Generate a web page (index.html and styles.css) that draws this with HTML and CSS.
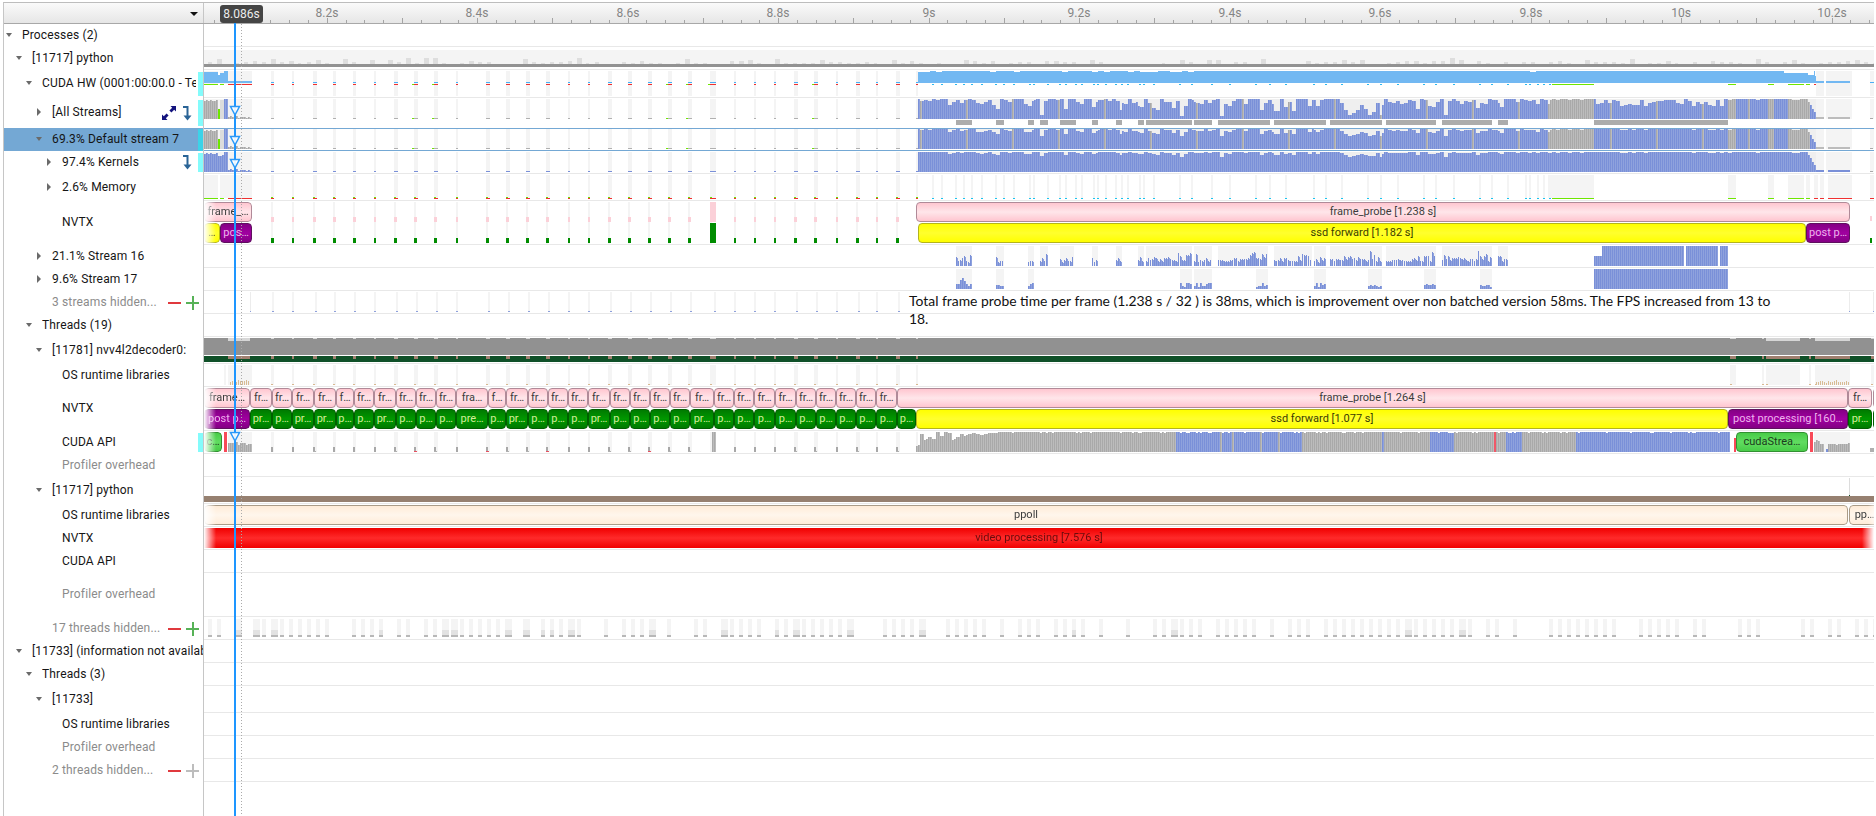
FILE: index.html
```html
<!doctype html>
<html>
<head>
<meta charset="utf-8">
<title>Timeline</title>
<link rel="stylesheet" href="styles.css">
</head>
<body>
<div class="app">
    <div class="head">
        <div class="corner"><i class="drop"></i></div>
        <div class="ruler" id="ruler"></div>
    </div>

    <div class="row">
        <div class="label"><i class="tw open"></i><span class="name">Processes (2)</span></div>
        <div class="track"></div>
    </div>
    <div class="row">
        <div class="label lv1"><i class="tw open"></i><span class="name">[11717] python</span></div>
        <div class="track" id="summary"></div>
    </div>
    <div class="row h28">
        <div class="label lv2"><i class="tw open"></i><span class="name">CUDA HW (0001:00:00.0 - Tegra)</span><b class="strip"></b></div>
        <div class="track" id="hw"></div>
    </div>
    <div class="row h30 noline">
        <div class="label lv3"><i class="tw shut"></i><span class="name">[All Streams]</span>
            <svg class="ico expand" width="14" height="14" viewBox="0 0 14 14"><path d="M0 14V8.500L1.800 10.200 4.600 7.400 6.600 9.400 3.800 12.200 5.500 14ZM14 0V5.500L12.200 3.800 9.400 6.600 7.400 4.600 10.200 1.800 8.500 0Z"/></svg>
            <svg class="ico drill" width="10" height="15" viewBox="0 0 10 15"><path d="M1 1H5.500V11" fill="none" stroke-width="2"/><path class="head-fill" d="M1.500 9.500H9.500L5.500 14.500Z"/></svg>
            <b class="strip"></b></div>
        <div class="track" id="all"></div>
    </div>
    <div class="row selected">
        <div class="label lv3"><i class="tw open"></i><span class="name">69.3% Default stream 7</span><b class="strip"></b></div>
        <div class="track" id="def"></div>
    </div>
    <div class="row">
        <div class="label lv4"><i class="tw shut"></i><span class="name">97.4% Kernels</span>
            <svg class="ico drill" width="10" height="15" viewBox="0 0 10 15"><path d="M1 1H5.500V11" fill="none" stroke-width="2"/><path class="head-fill" d="M1.500 9.500H9.500L5.500 14.500Z"/></svg>
            <b class="strip"></b></div>
        <div class="track" id="kern"></div>
    </div>
    <div class="row h27">
        <div class="label lv4"><i class="tw shut"></i><span class="name">2.6% Memory</span></div>
        <div class="track" id="mem"></div>
    </div>
    <div class="row h44">
        <div class="label lv4"><i class="tw"></i><span class="name">NVTX</span></div>
        <div class="track" id="nvtx"></div>
    </div>
    <div class="row">
        <div class="label lv3"><i class="tw shut"></i><span class="name">21.1% Stream 16</span></div>
        <div class="track" id="s16"></div>
    </div>
    <div class="row">
        <div class="label lv3"><i class="tw shut"></i><span class="name">9.6% Stream 17</span></div>
        <div class="track" id="s17"></div>
    </div>
    <div class="row">
        <div class="label lv3 dim"><i class="tw"></i><span class="name">3 streams hidden...</span>
            <svg class="ico pm" width="31" height="14" viewBox="0 0 31 14"><path class="minus" d="M0 6H13V8H0Z"/><path class="plus" d="M18 6H24V0H26V6H31V8H26V14H24V8H18Z"/></svg></div>
        <div class="track" id="hid3"></div>
    </div>
    <div class="row">
        <div class="label lv2"><i class="tw open"></i><span class="name">Threads (19)</span></div>
        <div class="track"></div>
    </div>
    <div class="row h27">
        <div class="label lv3"><i class="tw open"></i><span class="name">[11781] nvv4l2decoder0:</span></div>
        <div class="track" id="dec"></div>
    </div>
    <div class="row">
        <div class="label lv4"><i class="tw"></i><span class="name">OS runtime libraries</span></div>
        <div class="track" id="os1"></div>
    </div>
    <div class="row h44">
        <div class="label lv4"><i class="tw"></i><span class="name">NVTX</span></div>
        <div class="track" id="nv1"></div>
    </div>
    <div class="row">
        <div class="label lv4"><i class="tw"></i><span class="name">CUDA API</span><b class="strip"></b></div>
        <div class="track" id="api1"></div>
    </div>
    <div class="row">
        <div class="label lv4 dim"><i class="tw"></i><span class="name">Profiler overhead</span></div>
        <div class="track"></div>
    </div>
    <div class="row h27">
        <div class="label lv3"><i class="tw open"></i><span class="name">[11717] python</span></div>
        <div class="track" id="py"></div>
    </div>
    <div class="row">
        <div class="label lv4"><i class="tw"></i><span class="name">OS runtime libraries</span></div>
        <div class="track" id="os2"></div>
    </div>
    <div class="row">
        <div class="label lv4"><i class="tw"></i><span class="name">NVTX</span></div>
        <div class="track" id="nv2"></div>
    </div>
    <div class="row">
        <div class="label lv4"><i class="tw"></i><span class="name">CUDA API</span></div>
        <div class="track"></div>
    </div>
    <div class="row h44">
        <div class="label lv4 dim"><i class="tw"></i><span class="name">Profiler overhead</span></div>
        <div class="track"></div>
    </div>
    <div class="row">
        <div class="label lv3 dim"><i class="tw"></i><span class="name">17 threads hidden...</span>
            <svg class="ico pm" width="31" height="14" viewBox="0 0 31 14"><path class="minus" d="M0 6H13V8H0Z"/><path class="plus" d="M18 6H24V0H26V6H31V8H26V14H24V8H18Z"/></svg></div>
        <div class="track" id="hid17"></div>
    </div>
    <div class="row">
        <div class="label lv1"><i class="tw open"></i><span class="name">[11733] (information not available)</span></div>
        <div class="track"></div>
    </div>
    <div class="row">
        <div class="label lv2"><i class="tw open"></i><span class="name">Threads (3)</span></div>
        <div class="track"></div>
    </div>
    <div class="row h27">
        <div class="label lv3"><i class="tw open"></i><span class="name">[11733]</span></div>
        <div class="track"></div>
    </div>
    <div class="row">
        <div class="label lv4"><i class="tw"></i><span class="name">OS runtime libraries</span></div>
        <div class="track"></div>
    </div>
    <div class="row">
        <div class="label lv4 dim"><i class="tw"></i><span class="name">Profiler overhead</span></div>
        <div class="track"></div>
    </div>
    <div class="row">
        <div class="label lv3 dim"><i class="tw"></i><span class="name">2 threads hidden...</span>
            <svg class="ico pm off" width="31" height="14" viewBox="0 0 31 14"><path class="minus" d="M0 6H13V8H0Z"/><path class="plus" d="M18 6H24V0H26V6H31V8H26V14H24V8H18Z"/></svg></div>
        <div class="track"></div>
    </div>
    <div class="row rest">
        <div class="label"></div>
        <div class="track"></div>
    </div>
</div>

<p class="note">Total frame probe time per frame (1.238 s / 32 ) is 38ms, which is improvement over non batched version 58ms. The FPS increased from 13 to 18.</p>
<svg class="cursor" id="cursor" width="1876" height="816"></svg>
<div class="flag">8.086s</div>

<script src="app.js"></script>
</body>
</html>
```

FILE: styles.css
```css
*{
    box-sizing: border-box;
}
html,body{
    height: 100%;
    margin: 0;
}
body{
    background-color: #fff;
    font: 12px Roboto,sans-serif;
    color: #151515;
    padding: 2px 2px 0 3px;
    overflow: hidden;
}
.app{
    height: 100%;
    display: flex;
    flex-direction: column;
    border-top: 1px solid #bdbdbd;
    border-left: 1px solid #c6c6c6;
}

.head{
    display: flex;
    flex: none;
    height: 21px;
    background: linear-gradient(#fafafa,#e6e6e6);
    border-bottom: 1px solid #a8a8a8;
}
.corner{
    width: 200px;
    flex: none;
    border-right: 1px solid #c6c6c6;
    position: relative;
}
.drop{
    position: absolute;
    left: 186px;
    top: 9px;
    border: 4px solid transparent;
    border-top: 4px solid #111;
    border-bottom: 0;
}
.ruler{
    flex: 1;
    position: relative;
    overflow: hidden;
}
.ruler svg,.track svg{
    position: absolute;
    left: 0;
    top: 0;
    shape-rendering: crispEdges;
}
.tick-label{
    position: absolute;
    top: 3px;
    width: 40px;
    margin-left: -20px;
    text-align: center;
    line-height: 14px;
    color: #858585;
}

.row{
    display: flex;
    flex: none;
    height: 23px;
}
.h27{ height: 27px; }
.h28{ height: 28px; }
.h30{ height: 30px; }
.h44{ height: 44px; }
.rest{ flex: 1; }

.label{
    width: 200px;
    flex: none;
    display: flex;
    align-items: center;
    border-right: 1px solid #c6c6c6;
}
.lv1{ padding-left: 10px; }
.lv2{ padding-left: 20px; }
.lv3{ padding-left: 30px; }
.lv4{ padding-left: 40px; }
.dim{ color: #8b8b8b; }
.name{
    flex: 1;
    min-width: 0;
    overflow: hidden;
    white-space: nowrap;
    letter-spacing: .15px;
    padding: 0 3px 2px 0;
}
.tw{
    flex: none;
    width: 18px;
    height: 8px;
    position: relative;
}
.tw::before{
    content: '';
    position: absolute;
    left: 2px;
    top: -1px;
}
.open::before{
    top: 1px;
    border: 3px solid transparent;
    border-top: 4px solid #6a6a6a;
    border-bottom: 0;
}
.shut::before{
    left: 3px;
    border: 4px solid transparent;
    border-left: 4px solid #6a6a6a;
    border-right: 0;
}
.strip{
    flex: none;
    width: 5px;
    margin: 2px 0 2px 2px;
    align-self: stretch;
    background-color: #84fbfb;
}
.ico{
    flex: none;
}
.expand{
    fill: #14147e;
    margin-right: 6px;
}
.drill{
    stroke: #2a6496;
    margin-right: 4px;
}
.drill .head-fill{
    fill: #2a6496;
    stroke: none;
}
.pm{
    margin-right: 4px;
}
.minus{ fill: #e0393e; }
.plus{ fill: #57b257; }
.off .plus{ fill: #bdbdbd; }

.selected .label{
    background-color: #74a8d4;
}
.selected .strip{
    margin: 1px 0 0 2px;
    background-color: #3cd3e8;
}
.selected .track{
    border-bottom-color: #74a8d4;
    box-shadow: inset 0 1px #74a8d4;
}

.track{
    flex: 1;
    min-width: 0;
    position: relative;
    overflow: hidden;
    border-bottom: 1px solid #e8e8e8;
}
.noline .track{
    border-bottom: 0;
}
.rest .track{
    border-bottom: 0;
}

.bar{
    position: absolute;
    display: flex;
    align-items: center;
    justify-content: center;
    overflow: hidden;
    white-space: nowrap;
    border: 1px solid;
    border-radius: 4px;
    font-size: 11px;
    line-height: 14px;
}
.pink{
    background: linear-gradient(#ffc6d0,#ffe6ea 50%,#ffc6d0);
    border-color: #b08a98;
    color: #3c3c3c;
}
.yellow{
    background: linear-gradient(#ffff00,#ffff2e 50%,#ffff00);
    border-color: #b4b41c;
    color: #3c3c00;
}
.green{
    background: linear-gradient(#007a00,#009800 50%,#007a00);
    border-color: #006000;
    color: #d4ec9c;
}
.purple{
    background: linear-gradient(#840084,#a000a0 50%,#840084);
    border-color: #5f105f;
    color: #ecb4ec;
}
.lime{
    background: linear-gradient(#48cc48,#60dc60 50%,#48cc48);
    border-color: #329032;
    color: #1c3c1c;
}
.cream{
    background: linear-gradient(#ffecd8,#fff6ec 50%,#ffecd8);
    border-color: #aa9c88;
    color: #3c3c3c;
}
.red{
    background: linear-gradient(#f00000,#ff2a2a 50%,#f00000);
    border: 0;
    border-radius: 0;
    color: #6a0c0c;
}
.fade-l{
    -webkit-mask-image: linear-gradient(to right,transparent,#000 12px);
    mask-image: linear-gradient(to right,transparent,#000 12px);
}
.fade-r{
    -webkit-mask-image: linear-gradient(to left,transparent,#000 12px);
    mask-image: linear-gradient(to left,transparent,#000 12px);
}
.fade-lr{
    -webkit-mask-image: linear-gradient(to right,transparent,#000 12px,#000 calc(100% - 12px),transparent);
    mask-image: linear-gradient(to right,transparent,#000 12px,#000 calc(100% - 12px),transparent);
}

.note{
    position: absolute;
    left: 909px;
    top: 292px;
    width: 872px;
    margin: 0;
    font: 13.9px/18.3px Lato,sans-serif;
    color: #111;
}
.cursor{
    position: absolute;
    left: 0;
    top: 0;
    pointer-events: none;
}
.flag{
    position: absolute;
    left: 220px;
    top: 5px;
    width: 43px;
    height: 18px;
    border-radius: 3px;
    background-color: #454545;
    color: #ececec;
    line-height: 18px;
    text-align: center;
}
```

FILE: app.js
```js
const TX=204;
const BLUE=['#7a90d8','#8fa2dd'];
const GRAY=['#a9a9a9','#bcbcbc'];
const BAND='#f4f4f4';

// frame starts, seen on every row before the long ssd frame
const marks=[[271,3],[292,2],[313,4],[333,3],[353,3],[374,2],[394,4],[414,4],[434,4],[456,2],[486,4],[506,4],
    [526,4],[546,4],[568,2],[588,2],[608,4],[628,4],[648,4],[668,4],[688,4],[710,6],[734,2],[754,2],[774,2],
    [794,4],[814,4],[836,2],[856,4],[876,2],[896,4],[916,2]];
const cyan=[932,941,955,963,971,981,995,1003,1013,1029,1033,1047,1059,1065,1075,1081,1093,1097,1105,1115,1121,
    1127,1139,1143,1153,1179,1191,1211,1229,1255,1269,1285,1313,1325,1341,1367,1380,1397,1423,1435,1453,1479,
    1491,1507,1525,1529,1537,1543,1549];
const blocks=[[956,972],[996,1004],[1028,1034],[1040,1048],[1060,1074],[1092,1098],[1116,1122],[1138,1144],
    [1146,1192],[1194,1212],[1218,1268],[1274,1312],[1314,1326],[1330,1382],[1386,1436],[1442,1492],[1498,1508]];
const grayBlocks=[[956,972],[996,1004],[1028,1034],[1040,1048],[1060,1076],[1092,1098],[1116,1122],[1138,1144],
    [1146,1192],[1194,1212],[1218,1270],[1274,1326],[1330,1382],[1386,1436],[1442,1492],[1498,1508],[1594,1728]];
const s17=[[956,972],[996,1004],[1028,1034],[1180,1192],[1194,1212],[1256,1268],[1314,1326],[1368,1382],[1424,1436],[1480,1492]];
// parts of the long frame where the gpu is idle (gray) instead of busy
const idle=[[1548,1594],[1728,1736],[1768,1774],[1788,1810]];
const endMarks=[[1730,6],[1762,2],[1766,34],[1809,2],[1815,35],[1871,4]];

function noise(n){
    let v=Math.sin(n*12.9898+4.1)*43758.5453;
    return v-Math.floor(v);
}
function inside(list,x){
    return list.some(b=>x>=b[0]&&x<b[1]);
}

const tracks={};
document.querySelectorAll('.track[id]').forEach(el=>{
    tracks[el.id]={el:el,top:el.getBoundingClientRect().top,h:el.clientHeight,out:[]};
});
function rect(id,x,y,w,h,c){
    tracks[id].out.push(`<rect x="${x}" y="${y}" width="${w}" height="${h}" fill="${c}"/>`);
}
function bar(id,x0,x1,y0,y1,cls,text){
    let t=tracks[id];
    let d=document.createElement('div');
    d.className='bar '+cls;
    d.style.left=(x0-TX)+'px';
    d.style.top=(y0-t.top)+'px';
    d.style.width=(x1-x0)+'px';
    d.style.height=(y1-y0)+'px';
    d.textContent=text;
    t.el.appendChild(d);
}
function cols(id,x0,x1,y0,y1,pair,dip){
    for(let x=x0;x<x1;x+=2){
        let cut=Math.round(dip(x));
        let h=y1-y0-cut;
        if(h<=0) continue;
        rect(id,x,y1-h,1,h,pair[0]);
        rect(id,x+1,y1-h,1,h,pair[1]);
    }
}
function eachMark(f){
    for(let m of marks) f(m[0],m[1]);
}

// ruler
(function(){
    let ruler=document.getElementById('ruler');
    let ticks='';
    let xof=t=>Math.round(326.7+(t-8.2)*752.5);
    for(let i=-8;i<=84;i++){
        let x=Math.round(326.7+i*18.81);
        let tall=i%4==0;
        ticks+=`<rect x="${x-TX}" y="${tall?15:17}" width="1" height="${tall?5:3}" fill="#a4a4a4"/>`;
    }
    ruler.innerHTML=`<svg width="1670" height="20">${ticks}</svg>`;
    [['8.2s',8.2],['8.4s',8.4],['8.6s',8.6],['8.8s',8.8],['9s',9],['9.2s',9.2],['9.4s',9.4],['9.6s',9.6],['9.8s',9.8],['10s',10],['10.2s',10.2]].forEach(l=>{
        let s=document.createElement('span');
        s.className='tick-label';
        s.textContent=l[0];
        s.style.left=(xof(l[1])-TX)+'px';
        ruler.appendChild(s);
    });
})();

// process summary
rect('summary',204,50,1670,14,BAND);
for(let x=208;x<1874;x+=9){
    let k=noise(x);
    if(k<.2) continue;
    let h=1+Math.round(k*k*k*5);
    rect('summary',x,64-h,3+Math.round(k*2),h,'#dedede');
}
rect('summary',204,64,1670,3,'#929292');

// CUDA HW
rect('hw',204,71,14,13,BAND);rect('hw',220,71,32,13,BAND);
rect('hw',204,72,14,11,'#72b8f2');rect('hw',218,75,2,8,'#72b8f2');rect('hw',220,73,4,10,'#72b8f2');
rect('hw',224,71,4,12,'#72b8f2');rect('hw',228,81,24,2,'#72b8f2');
rect('hw',204,84,14,1,'#6ee600');rect('hw',220,84,4,1,'#6ee600');rect('hw',228,84,24,1,'#f03030');
eachMark((x,w)=>{
    rect('hw',x,71,w,25,BAND);
    rect('hw',x,82,w,1,'#4aaef4');
    rect('hw',x,84,w,1,'#f03030');
    if(x>=414&&x<440||x==668||x==688||x==710||x==814) rect('hw',x-2,84,2,1,'#6ee600');
});
rect('hw',918,71,897,12,'#72b8f2');
for(let x=918;x<1815;x+=6){
    let k=noise(x*3);
    if(x<1190&&k>.78||x>1520&&x<1545&&k>.3) rect('hw',x,71,6,1,'#fff');
}
rect('hw',1784,71,30,2,'#fff');rect('hw',1808,71,6,4,'#fff');
for(let x of cyan) rect('hw',x,84,2,1,'#2cb8f0');
[[1552,1594],[1728,1736],[1768,1774],[1788,1804],[1806,1810]].forEach(g=>rect('hw',g[0],84,g[1]-g[0],1,'#6ee600'));
[[1814,1818],[1820,1824],[1828,1852]].forEach(g=>rect('hw',g[0],84,g[1]-g[0],1,'#f03030'));
rect('hw',1816,71,8,25,BAND);rect('hw',1826,71,26,25,BAND);
rect('hw',1812,76,4,7,'#72b8f2');rect('hw',1816,81,8,2,'#72b8f2');rect('hw',1826,81,24,2,'#72b8f2');
rect('hw',1870,71,4,25,BAND);rect('hw',1870,82,4,1,'#4aaef4');

// queue charts, same shape on the three rows but less dipping further down
function queue(id,y0,y1,dipIn,dipOut,phase){
    rect(id,918,y0,898,y1-y0,'#efefef');
    rect(id,1816,y0,8,y1-y0,BAND);rect(id,1826,y0,26,y1-y0,BAND);rect(id,1870,y0,4,y1-y0,BAND);
    for(let x=918;x<1816;x+=2){
        let pair=inside(idle,x)&&id!='kern'?GRAY:BLUE;
        if(x%46==0&&id!='kern') pair=GRAY;
        let a=inside(blocks,x)?dipIn:dipOut;
        let k=noise(Math.floor(x/4)+phase);
        let cut=k*k*k*a;
        if(x>1548) cut=noise(Math.floor(x/4)+phase)*(x>1594&&x<1728&&id=='all'?7:0.6);
        if(x>=1806) cut=(x-1806)*1.6;
        let h=y1-y0-Math.round(cut);
        if(h>0){
            rect(id,x,y1-h,1,h,pair[0]);
            rect(id,x+1,y1-h,1,h,pair[1]);
        }
    }
    rect(id,1816,y1-2,8,2,id=='kern'?BLUE[0]:GRAY[1]);
    rect(id,1828,y1-2,22,2,id=='kern'?BLUE[0]:GRAY[1]);
    rect(id,1870,y1-1,3,1,GRAY[0]);
}
function firstFrame(id,y0,y1){
    rect(id,204,y0,48,y1-y0,BAND);
    cols(id,204,218,y0+1,y1,id=='kern'?BLUE:GRAY,x=>noise(x)*1.5);
    if(id=='kern'){
        cols(id,218,224,y0+3,y1,BLUE,x=>noise(x)*2);
    }else{
        rect(id,218,y0+10,2,y1-y0-10,'#6ee600');
        rect(id,220,y0+1,4,y1-y0-1,'#dcdcdc');
    }
    cols(id,224,228,y0,y1,BLUE,x=>0);
    cols(id,228,252,y1-3,y1,id=='kern'?BLUE:GRAY,x=>noise(x)*2);
    eachMark((x,w)=>{
        rect(id,x,y0,w,y1-y0,BAND);
        rect(id,x,y1-1,w,1,id=='kern'?'#7a90d8':'#b0b0b0');
        if(id!='kern'&&(x==414||x==434||x==668||x==688||x==814)) rect(id,x-2,y1-1,2,1,'#6ee600');
    });
}
firstFrame('all',99,119);
firstFrame('def',129,149);
firstFrame('kern',152,172);
queue('all',99,119,18,7,1);
queue('def',129,149,8,4,1);
queue('kern',152,172,5,2,1);
for(let b of grayBlocks) rect('all',b[0],120,b[1]-b[0],5,'#acacac');

// memory row
rect('mem',204,175,14,23,BAND);rect('mem',220,175,32,23,BAND);
rect('mem',204,198,14,1,'#6ee600');rect('mem',220,198,4,1,'#6ee600');rect('mem',228,198,24,1,'#f03030');
eachMark((x,w)=>{
    rect('mem',x,175,w,23,BAND);
    rect('mem',x,198,w,1,'#f03030');
    rect('mem',x,197,Math.min(w,2),1,'#6ee600');
});
for(let x of cyan){
    rect('mem',x,175,2,23,BAND);
    rect('mem',x,198,2,1,'#18c4f0');
}
[[1548,1594],[1728,1736],[1768,1774],[1788,1804],[1806,1810]].forEach(g=>{
    rect('mem',g[0],175,g[1]-g[0],23,BAND);
    rect('mem',Math.max(g[0],1552),198,g[1]-Math.max(g[0],1552),1,'#6ee600');
});
[[1814,1818],[1820,1824],[1828,1852]].forEach(g=>{
    rect('mem',g[0],175,g[1]-g[0],23,BAND);
    rect('mem',g[0],198,g[1]-g[0],1,'#f03030');
});
rect('mem',1870,175,4,23,BAND);rect('mem',1870,198,4,1,'#f03030');

// first NVTX row
eachMark((x,w)=>{
    if(x==916) return;
    rect('nvtx',x,202,Math.min(w,2),42,BAND);
    rect('nvtx',x,w==6?202:217,Math.min(w,w==6?6:3),w==6?20:5,'#fbd0d8');
    rect('nvtx',x,w==6?223:238,Math.min(w,w==6?6:3),w==6?20:5,'#008c00');
});
bar('nvtx',204,252,202,222,'pink fade-l','frame_\u2026');
bar('nvtx',204,220,223,243,'yellow fade-l','\u2026');
bar('nvtx',220,252,223,243,'purple','pos\u2026');
bar('nvtx',916,1850,202,222,'pink','frame_probe [1.238 s]');
bar('nvtx',918,1806,223,243,'yellow','ssd forward [1.182 s]');
bar('nvtx',1806,1850,223,243,'purple','post p\u2026');
rect('nvtx',1870,216,2,5,'#fbd0d8');rect('nvtx',1870,238,2,5,'#008c00');

// streams
for(let b of blocks) rect('s16',b[0],246,b[1]-b[0],20,BAND);
for(let b of blocks){
    for(let x=b[0];x<b[1];x+=2){
        let n=noise(x/2)*noise(Math.floor(x/10));
        let h=b[1]-b[0]<30?4+Math.round(noise(x/2)*noise(x)*10):5+Math.round(n*9)+(b[1]-x<16&&noise(x)>.5?5:0);
        rect('s16',x,266-h,1,h,BLUE[0]);
        if(noise(x+.5)>.3) rect('s16',x+1,266-h+1,1,h-1,BLUE[1]);
    }
}
cols('s16',1594,1602,246,266,BLUE,x=>10);
cols('s16',1602,1684,246,266,BLUE,x=>0);
cols('s16',1686,1718,246,266,BLUE,x=>0);
cols('s16',1720,1728,246,266,BLUE,x=>0);
s17.forEach((b,i)=>{
    rect('s17',b[0],269,b[1]-b[0],20,BAND);
    for(let x=b[0];x<b[1];x+=2){
        let h=i<3?3+Math.round(noise(x)*noise(x/3)*9):2+Math.round(noise(x)*4);
        rect('s17',x,289-h,1,h,BLUE[0]);
        rect('s17',x+1,289-h,1,h,BLUE[1]);
    }
});
cols('s17',1594,1728,269,289,BLUE,x=>0);

// hidden streams, the note covers the middle of this row
eachMark((x,w)=>{
    if(x>896) return;
    rect('hid3',x+w-2,292,2,19,BAND);
    rect('hid3',x+w-2,311,2,1,'#8ea0dc');
});
rect('hid3',250,292,1,19,'#ececec');rect('hid3',250,311,1,1,'#8ea0dc');
[1849,1873].forEach(x=>{
    rect('hid3',x,292,1,19,'#ececec');
    rect('hid3',x,311,1,1,'#8ea0dc');
});

// decoder thread
rect('dec',204,338,1670,17,'#919191');
rect('dec',204,356,1670,6,'#0f5028');
rect('dec',228,338,22,3,'#d6d6d6');rect('dec',228,356,22,3,'#a08070');
eachMark((x,w)=>{
    rect('dec',x,338,w,1,'#d6d6d6');
    rect('dec',x,356,w,3,'#a08070');
});
for(let m of endMarks){
    rect('dec',m[0],338,m[1],m[1]>6?3:1,'#d6d6d6');
    rect('dec',m[0],356,m[1],3,'#a08070');
}

function osRow(x,w){
    rect('os1',x,365,w,20,BAND);
    rect('os1',x,384,Math.min(w,2),1,'#d8b890');
}
rect('os1',224,365,2,20,BAND);rect('os1',228,365,24,20,BAND);
for(let x=230;x<250;x+=2){
    let h=3+Math.round(noise(x)*2);
    rect('os1',x,385-h,1,h,'#d8bc94');
}
eachMark(osRow);
endMarks.forEach(m=>osRow(m[0],m[1]));
for(let x=1816;x<1850;x+=2){
    let h=2+Math.round(noise(x)*3);
    rect('os1',x,385-h,1,h,'#d8bc94');
}

// thread NVTX, one frame per box
let edges=[250,272,292,314,336,354,374,396,416,436,456,488,506,528,548,568,588,610,630,650,670,690,714,734,754,775,796,816,836,856,876,897];
bar('nv1',204,250,388,408,'pink fade-l','frame\u2026');
bar('nv1',204,250,409,429,'purple fade-l','post p\u2026');
for(let i=0;i+1<edges.length;i++){
    let a=edges[i],b=edges[i+1],w=b-a;
    bar('nv1',a,b,388,408,'pink',w<19?'f\u2026':w<32?'fr\u2026':'fra\u2026');
    bar('nv1',a,b,409,429,'green',w<21.5?'p\u2026':w<32?'pr\u2026':'pre\u2026');
}
bar('nv1',897,1848,388,408,'pink','frame_probe [1.264 s]');
bar('nv1',897,916,409,429,'green','p\u2026');
bar('nv1',916,1728,409,429,'yellow','ssd forward [1.077 s]');
bar('nv1',1728,1848,409,429,'purple','post processing [160\u2026');
bar('nv1',1848,1872,388,408,'pink','fr\u2026');
bar('nv1',1848,1872,409,429,'green','pr\u2026');
bar('nv1',1873,1890,388,408,'pink','');
bar('nv1',1873,1890,409,429,'green','');

// CUDA API
rect('api1',228,432,24,20,BAND);
rect('api1',224,432,3,20,'#f84a58');
cols('api1',228,252,442,452,GRAY,x=>noise(x)*3);
bar('api1',204,222,432,452,'lime fade-l','c\u2026');
eachMark((x,w)=>{
    rect('api1',x,432,w,20,BAND);
    if(w==6) cols('api1',x+2,x+w,432,452,GRAY,x=>0);
    else rect('api1',x,447,2,5,'#a8a8a8');
    if(w==4) rect('api1',x,451,3,1,x%3==0?'#e85060':'#b0b0b0');
});
let apiBlue=[[1176,1220],[1221,1232],[1233,1260],[1262,1278],[1280,1302],[1381,1383],[1430,1453],[1506,1522],[1576,1730]];
for(let x=916;x<1730;x+=2){
    let pair=inside(apiBlue,x)?BLUE:GRAY;
    let cut=x<1000?noise(Math.floor(x/4))*(1000-x)/6:noise(x)>.85?1:0;
    let h=20-Math.round(cut);
    rect('api1',x,452-h,1,h,pair[0]);
    rect('api1',x+1,452-h,1,h,pair[1]);
}
rect('api1',1494,432,2,20,'#f05868');
rect('api1',1734,438,2,14,'#f84a58');
bar('api1',1736,1808,432,452,'lime','cudaStrea\u2026');
rect('api1',1810,432,3,20,'#f84a58');
rect('api1',1814,432,36,20,BAND);
cols('api1',1814,1824,438,452,GRAY,x=>noise(x)*8);
rect('api1',1826,449,2,3,BLUE[0]);
cols('api1',1828,1850,443,452,GRAY,x=>noise(x)*2);
rect('api1',1870,448,4,4,'#b0b0b0');

// python thread
rect('py',1849,478,1,17,'#dcdcdc');
rect('py',204,496,1670,6,'#968070');
rect('py',1849,495,1,1,'#0f5028');
bar('os2',204,1848,505,525,'cream fade-l','ppoll');
bar('os2',1849,1880,505,525,'cream fade-r','pp\u2026');
bar('nv2',204,1874,528,548,'red fade-lr','video processing [7.576 s]');

// hidden threads sampling
for(let x=208;x<1874;x+=9){
    let k=noise(x*.7);
    if(k<.3) continue;
    let w=k>.88?7:4;
    rect('hid17',x,619,w,18,BAND);
    rect('hid17',x,635,w,2,'#b8b8b8');
    if(k>.85) rect('hid17',x,630,w,5,'#e2e2e2');
}

for(let id in tracks){
    let t=tracks[id];
    let svg=`<svg width="1670" height="${t.h}" viewBox="${TX} ${t.top} 1670 ${t.h}">${t.out.join('')}</svg>`;
    t.el.insertAdjacentHTML('afterbegin',svg);
}

// time cursor with its markers
let c='<path d="M241.500 24V816" stroke="#ababab" stroke-dasharray="1 2"/>';
c+='<rect x="234" y="20" width="2" height="796" fill="#1e96ff"/>';
[106.500,136.500,159.500,432.500].forEach(y=>{
    c+=`<path d="M230.500 ${y}H239.500L235 ${y+8.500}Z" fill="#fff" fill-opacity=".9" stroke="#2a98f8" stroke-width="1.500"/>`;
});
document.getElementById('cursor').innerHTML=c;
```
